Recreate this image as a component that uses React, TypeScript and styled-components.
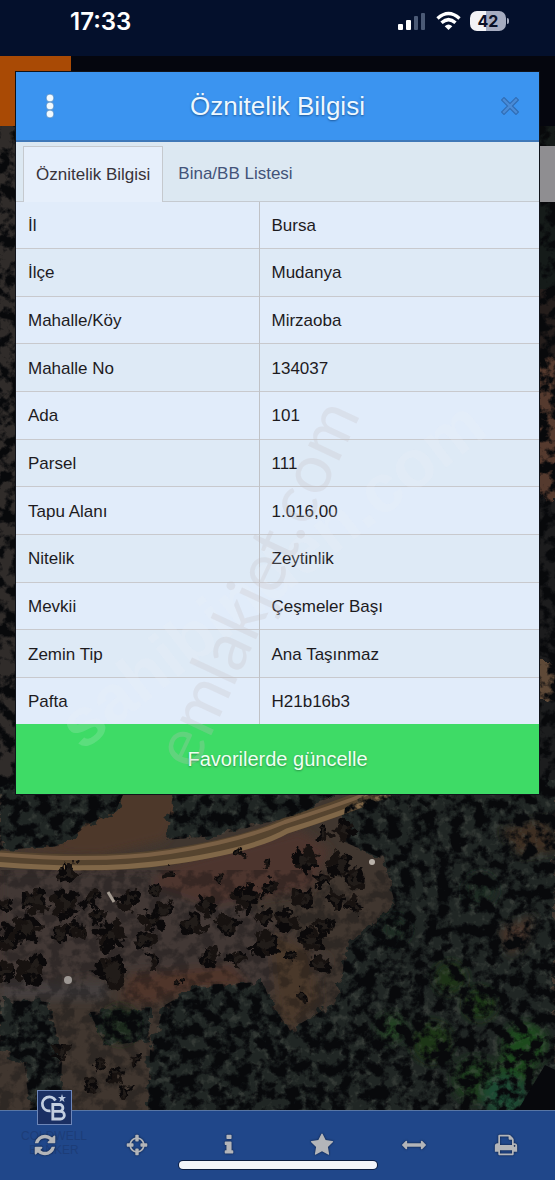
import React from "react";
import styled, { createGlobalStyle } from "styled-components";

const GlobalStyle = createGlobalStyle`
  * { box-sizing: border-box; }
  body {
    margin: 0;
    background: #15191a;
    font-family: "Liberation Sans", Arial, Helvetica, sans-serif;
  }
  button { font: inherit; border: 0; margin: 0; padding: 0; cursor: pointer; }
`;

const Screen = styled.div`
  position: relative;
  display: flex;
  flex-direction: column;
  min-height: 100vh;
  overflow: hidden;
`;

const MapLayer = styled.svg`
  position: absolute;
  inset: 0;
  width: 100%;
  height: 100%;
`;

const StatusBar = styled.header`
  position: relative;
  display: flex;
  justify-content: space-between;
  align-items: flex-start;
  height: 56px;
  padding: 8px 49px 0 70px;
  background: #04102c;
  color: #ffffff;
`;

const Clock = styled.time`
  font-family: Inter, "Liberation Sans", sans-serif;
  font-size: 24px;
  line-height: 28px;
  font-weight: 600;
`;

const StatusIcons = styled.div`
  display: flex;
  align-items: center;
  gap: 9px;
  height: 26px;
`;

const Battery = styled.div`
  position: relative;
  width: 36px;
  height: 20px;
  border-radius: 7px;
  background: linear-gradient(to right, #f2f2f6 45%, #a6acc0 45%);
  color: #0a1026;
  font-family: Inter, "Liberation Sans", sans-serif;
  font-size: 16px;
  line-height: 20px;
  font-weight: 700;
  text-align: center;

  &::after {
    content: "";
    position: absolute;
    right: -3px;
    top: 7px;
    width: 2px;
    height: 6px;
    border-radius: 0 2px 2px 0;
    background: #a6acc0;
  }
`;

const Main = styled.main`
  position: relative;
  flex: 1;
  padding: 16px;
`;

const TopBar = styled.div`
  position: absolute;
  top: 0;
  left: 0;
  right: 0;
  height: 70px;
  background: #05060e;
`;

const MenuTile = styled.div`
  width: 71px;
  height: 70px;
  background: #a94a05;
`;

const MapControl = styled.div`
  position: absolute;
  top: 90px;
  right: 0;
  width: 60px;
  height: 56px;
  background: #8f8e91;
`;

const Dialog = styled.section`
  position: relative;
  background: #e1ecfa;
  box-shadow: 0 0 0 1px #10131a;
`;

const DialogHeader = styled.div`
  display: grid;
  grid-template-columns: 68px 1fr 68px;
  align-items: center;
  height: 70px;
  background: #3b94f0;
  border-bottom: 2px solid #3f78b8;
`;

const DialogTitle = styled.h1`
  margin: 0;
  color: #eef8ff;
  font-size: 26px;
  line-height: 32px;
  font-weight: 400;
  text-align: center;
  text-shadow: 0 1px 2px #1f5a9c;
`;

const HeaderButton = styled.button<{ $end?: boolean }>`
  display: flex;
  justify-content: center;
  align-items: center;
  height: 68px;
  padding-left: ${(p) => (p.$end ? 10 : 0)}px;
  background: transparent;
`;

const TabList = styled.div`
  display: flex;
  height: 60px;
  padding: 4px 7px 0;
  background: #dce8f2;
  border-bottom: 1px solid #c5cad0;
`;

const Tab = styled.button<{ $active?: boolean }>`
  height: 56px;
  padding: 0 ${(p) => (p.$active ? 12 : 15)}px;
  border: ${(p) => (p.$active ? "1px solid #c5c9ce" : "0")};
  border-bottom: 0;
  background: ${(p) => (p.$active ? "#e6effb" : "transparent")};
  color: ${(p) => (p.$active ? "#38333a" : "#435379")};
  font-size: 17px;
  line-height: 20px;
`;

const Table = styled.table`
  width: 100%;
  height: 522px;
  border-collapse: collapse;
  table-layout: fixed;
  color: #1d1b1e;
  font-size: 17px;
  line-height: 20px;
`;

const Row = styled.tr`
  background: #e1ecfa;
  &:nth-child(even) { background: #deeaf6; }
  & + & { border-top: 1px solid #c8c9cd; }
`;

const Name = styled.th`
  width: 243px;
  padding: 2px 12px 0;
  border-right: 1px solid #c0c2c6;
  font-weight: 400;
  text-align: left;
`;

const Value = styled.td`
  padding: 2px 12px 0;
`;

const SaveButton = styled.button`
  display: block;
  width: 100%;
  height: 70px;
  background: #3edb66;
  color: #f0fff2;
  font-size: 20px;
  line-height: 24px;
  text-shadow: 0 1px 2px #2a8f45;
`;

const Watermark = styled.svg`
  position: absolute;
  inset: 0;
  width: 100%;
  height: 100%;
  pointer-events: none;
`;

const Toolbar = styled.nav`
  position: relative;
  display: grid;
  grid-template-columns: repeat(6, 1fr);
  height: 70px;
  padding-right: 2px;
  border-top: 1px solid #5876a5;
  background: #20478a;
`;

const ToolButton = styled.button`
  display: flex;
  justify-content: center;
  align-items: center;
  height: 68px;
  padding-right: 2px;
  background: transparent;
  color: #b3b5b9;

  svg { filter: drop-shadow(0 0 1px #0b1c3c); }
`;

const HomeIndicator = styled.div`
  position: absolute;
  left: 50%;
  bottom: 11px;
  width: 198px;
  height: 8px;
  border-radius: 4px;
  background: #f3f5fa;
  box-shadow: 0 0 0 1px #0d1e42;
  transform: translateX(-50%);
`;

const Agency = styled.div`
  position: absolute;
  left: 22px;
  top: -21px;
  display: flex;
  flex-direction: column;
  align-items: center;
  gap: 4px;
  width: 64px;
  color: #1d3d78;
  font-size: 12px;
  line-height: 14px;
  text-align: center;
`;

const rows: [string, string][] = [
  ["İl", "Bursa"],
  ["İlçe", "Mudanya"],
  ["Mahalle/Köy", "Mirzaoba"],
  ["Mahalle No", "134037"],
  ["Ada", "101"],
  ["Parsel", "111"],
  ["Tapu Alanı", "1.016,00"],
  ["Nitelik", "Zeytinlik"],
  ["Mevkii", "Çeşmeler Başı"],
  ["Zemin Tip", "Ana Taşınmaz"],
  ["Pafta", "H21b16b3"],
];

const tools: { label: string; d: string }[] = [
  {
    label: "Yenile",
    d: "M1639 1056q0 5-1 7-64 268-268 434.5t-478 166.5q-146 0-282.500-55t-243.500-157l-129 129q-19 19-45 19t-45-19-19-45v-448q0-26 19-45t45-19h448q26 0 45 19t19 45-19 45l-137 137q71 66 161 102t187 36q134 0 250-65t186-179q11-17 53-117 8-23 30-23h192q13 0 22.500 9.500t9.500 22.500zm25-800v448q0 26-19 45t-45 19h-448q-26 0-45-19t-19-45 19-45l138-138q-148-137-349-137-134 0-250 65t-186 179q-11 17-53 117-8 23-30 23h-199q-13 0-22.500-9.500t-9.500-22.500v-7q65-268 270-434.500t480-166.500q146 0 284 55.500t245 156.500l130-129q19-19 45-19t45 19 19 45z",
  },
  {
    label: "Konum",
    d: "M1325 1024h-109q-26 0-45-19t-19-45v-128q0-26 19-45t45-19h109q-32-108-112.500-188.500t-188.500-112.500v109q0 26-19 45t-45 19h-128q-26 0-45-19t-19-45v-109q-108 32-188.500 112.500t-112.500 188.500h109q26 0 45 19t19 45v128q0 26-19 45t-45 19h-109q32 108 112.500 188.500t188.500 112.500v-109q0-26 19-45t45-19h128q26 0 45 19t19 45v109q108-32 188.500-112.500t112.500-188.500zm339-192v128q0 26-19 45t-45 19h-143q-37 161-154.500 278.500t-278.500 154.500v143q0 26-19 45t-45 19h-128q-26 0-45-19t-19-45v-143q-161-37-278.500-154.500t-154.500-278.500h-143q-26 0-45-19t-19-45v-128q0-26 19-45t45-19h143q37-161 154.500-278.500t278.500-154.500v-143q0-26 19-45t45-19h128q26 0 45 19t19 45v143q161 37 278.500 154.500t154.500 278.500h143q26 0 45 19t19 45z",
  },
  {
    label: "Bilgi",
    d: "M1216 1344v128q0 26-19 45t-45 19h-512q-26 0-45-19t-19-45v-128q0-26 19-45t45-19h64v-384h-64q-26 0-45-19t-19-45v-128q0-26 19-45t45-19h384q26 0 45 19t19 45v576h64q26 0 45 19t19 45zm-128-1152v192q0 26-19 45t-45 19h-256q-26 0-45-19t-19-45v-192q0-26 19-45t45-19h256q26 0 45 19t19 45z",
  },
  {
    label: "Favoriler",
    d: "M1728 647q0 22-26 48l-363 354 86 500q1 7 1 20 0 21-10.500 35.500t-30.500 14.500q-19 0-40-12l-449-236-449 236q-22 12-40 12-21 0-31.500-14.500t-10.500-35.500q0-6 2-20l86-500-364-354q-25-27-25-48 0-37 56-46l502-73 225-455q19-41 49-41t49 41l225 455 502 73q56 9 56 46z",
  },
  {
    label: "Ölçüm",
    d: "M1792 896q0 26-19 45l-256 256q-19 19-45 19t-45-19-19-45v-128h-1024v128q0 26-19 45t-45 19-45-19l-256-256q-19-19-19-45t19-45l256-256q19-19 45-19t45 19 19 45v128h1024v-128q0-26 19-45t45-19 45 19l256 256q19 19 19 45z",
  },
  {
    label: "Yazdır",
    d: "M448 1536h896v-256h-896v256zm0-640h896v-384h-160q-40 0-68-28t-28-68v-160h-640v640zm1152 64q0-26-19-45t-45-19-45 19-19 45 19 45 45 19 45-19 19-45zm128 0v416q0 13-9.500 22.500t-22.500 9.500h-224v160q0 40-28 68t-68 28h-960q-40 0-68-28t-28-68v-160h-224q-13 0-22.500-9.500t-9.500-22.500v-416q0-79 56.500-135.500t135.500-56.500h64v-544q0-40 28-68t68-28h672q40 0 88 20t76 48l152 152q28 28 48 76t20 88v256h64q79 0 135.500 56.500t56.500 135.500z",
  },
];

/* Olive trees in the grove: x, y, crown radius. */
const trees: [number, number, number][] = [
  [67, 873, 10], [35, 902, 12], [65, 905, 14], [90, 900, 9], [98, 915, 8],
  [128, 900, 11], [27, 927, 14], [60, 933, 8], [75, 930, 9], [8, 940, 14],
  [5, 905, 9], [110, 935, 15], [112, 972, 17], [152, 920, 12], [165, 910, 8],
  [145, 940, 10], [153, 961, 8], [32, 970, 15], [5, 972, 10], [192, 925, 12],
  [207, 905, 10], [230, 925, 12], [210, 958, 9], [238, 958, 9], [247, 898, 14],
  [265, 945, 14], [268, 888, 9], [240, 852, 6], [170, 875, 5], [220, 878, 5],
  [156, 890, 6], [268, 862, 5], [180, 982, 4], [305, 860, 14], [325, 833, 7],
  [345, 830, 11], [340, 865, 14], [322, 880, 9], [355, 880, 10], [305, 898, 11],
  [335, 900, 10], [287, 920, 12], [312, 940, 13], [325, 925, 9], [320, 965, 10],
  [290, 957, 6], [303, 995, 6], [355, 905, 8], [100, 1065, 5], [115, 1075, 8],
  [135, 1062, 6], [90, 1085, 8], [60, 1050, 8], [125, 1092, 8], [265, 918, 8],
];

const grassPatches: [number, number, number, string][] = [
  [450, 978, 16, "#1a3319"], [480, 1004, 16, "#1b3819"], [392, 1028, 14, "#234024"],
  [432, 1042, 20, "#1b3519"], [525, 1045, 22, "#1f4a1c"], [515, 1068, 18, "#1e461f"],
  [475, 1080, 22, "#1c3a1c"], [505, 1096, 22, "#1f4a30"], [120, 1025, 18, "#1c2c1b"],
  [395, 930, 14, "#1b2b22"], [480, 890, 16, "#1d2a22"],
];

function Satellite() {
  return (
    <MapLayer viewBox="0 0 555 1180" preserveAspectRatio="xMidYMid slice" aria-hidden="true">
      <defs>
        <filter id="ragged" x="0" y="0" width="100%" height="100%" colorInterpolationFilters="sRGB">
          <feTurbulence type="fractalNoise" baseFrequency="0.09" numOctaves={3} seed={4} result="n" />
          <feDisplacementMap in="SourceGraphic" in2="n" scale={18} xChannelSelector="R" yChannelSelector="G" />
        </filter>
        <filter id="shade" x="0" y="0" width="100%" height="100%" colorInterpolationFilters="sRGB">
          <feTurbulence type="fractalNoise" baseFrequency="0.08" numOctaves={4} seed={11} />
          <feColorMatrix values="0 0 0 0 0.03  0 0 0 0 0.035  0 0 0 0 0.045  5 0 0 0 -2.1" />
          <feComposite in2="SourceGraphic" operator="in" />
        </filter>
        <filter id="glint" x="0" y="0" width="100%" height="100%" colorInterpolationFilters="sRGB">
          <feTurbulence type="fractalNoise" baseFrequency="0.13" numOctaves={3} seed={27} />
          <feColorMatrix values="0 0 0 0 0.32  0 0 0 0 0.34  0 0 0 0 0.31  0 4 0 0 -2.1" />
          <feComposite in2="SourceGraphic" operator="in" />
        </filter>
        <filter id="soft" x="-20%" y="-20%" width="140%" height="140%">
          <feGaussianBlur stdDeviation="5" />
        </filter>
        <g id="forest">
          <path d="M0 780H130L115 812 92 822 60 846 0 850Z" />
          <path d="M176 780H360L300 814 215 836 165 840Z" />
          <path d="M385 780H555V1180H145L150 1050 165 1005 200 985 262 982 275 1010 290 1030 340 1000 345 950 395 905 385 860 340 840 345 808Z" />
          <path d="M0 1000 50 1002 62 1060 60 1110H30L24 1062 0 1050Z" />
          <path d="M90 1012 150 1008 150 1040 105 1046Z" />
        </g>
      </defs>
      <rect width="555" height="1180" fill="#40362f" />
      <g filter="url(#soft)">
        <path d="M0 870H170L240 900 330 960 300 1000 150 970 0 990Z" fill="#423936" />
        <path d="M80 790H190L165 840 100 856 0 852 60 842Z" fill="#4e392b" />
        <path d="M170 865 300 830 330 850 310 890 210 905 150 885Z" fill="#4e352d" />
        <path d="M130 975 230 965 250 985 190 990 150 1005 120 1000Z" fill="#50342c" />
        <path d="M270 930 310 950 320 1000 290 1030 276 1010Z" fill="#4a382c" />
        <path d="M0 985 110 982 105 1000 0 1000Z" fill="#45403f" />
      </g>
      <g filter="url(#ragged)">
        <rect x="-20" y="120" width="50" height="670" fill="#302c2a" />
        <rect x="530" y="110" width="40" height="250" fill="#151b19" />
        <rect x="530" y="290" width="40" height="70" fill="#241d1b" />
        <rect x="530" y="360" width="40" height="138" fill="#553a2e" />
        <rect x="530" y="498" width="40" height="165" fill="#1c1c1d" />
        <rect x="530" y="663" width="40" height="36" fill="#5e4937" />
        <rect x="530" y="700" width="40" height="90" fill="#1c1d1e" />
        <use href="#forest" fill="#202624" />
      </g>
      <g filter="url(#soft)">
        <path d="M500 830 545 818 560 850 520 856Z" fill="#3c2f24" />
        <path d="M498 930 535 915 525 945 510 955Z" fill="#4a342b" />
        {grassPatches.map(([x, y, r, fill]) => (
          <circle key={`${x}-${y}`} cx={x} cy={y} r={r} fill={fill} />
        ))}
      </g>
      <g fill="none">
        <path d="M-5 858Q100 868 175 856T285 826Q330 812 380 792" stroke="#56442f" strokeWidth="16" />
        <path d="M-5 854Q100 863 170 852T285 822Q330 808 372 792" stroke="#7a6045" strokeWidth="4" />
        <path d="M-5 864Q100 873 178 861T287 831Q335 816 390 794" stroke="#806748" strokeWidth="5" />
      </g>
      <use href="#forest" fill="#fff" filter="url(#glint)" opacity="0.4" />
      <use href="#forest" fill="#fff" filter="url(#shade)" />
      <path d="M0 126H20V790H0ZM538 126H555V790H538Z" fill="#fff" filter="url(#shade)" />
      <rect x="0" y="870" width="400" height="240" fill="#fff" filter="url(#shade)" opacity="0.3" />
      <path d="M518 1110 545 1065 560 1072V1115Z" fill="#07080c" />
      <g filter="url(#ragged)">
        {trees.map(([x, y, r], i) => (
          <g key={i}>
            <circle cx={x} cy={y} r={r * 0.7} fill="#211c19" />
            {[0, 1, 2, 3, 4, 5, 6].map((k) => {
              const angle = k * 0.9 + i * 1.7;
              return (
                <circle
                  key={k}
                  cx={x + Math.cos(angle) * r * 0.7}
                  cy={y + Math.sin(angle) * r * 0.7}
                  r={r * (k % 2 ? 0.26 : 0.36)}
                  fill={k % 3 ? "#0b090a" : "#171210"}
                />
              );
            })}
          </g>
        ))}
      </g>
      <path d="M108 892 114 902" stroke="#a59c92" strokeWidth="3" />
      <circle cx="68" cy="980" r="4" fill="#9d9894" />
      <circle cx="372" cy="862" r="3" fill="#b9b2aa" />
    </MapLayer>
  );
}

function Signal() {
  return (
    <svg width="29" height="20" viewBox="0 0 29 20" aria-hidden="true">
      <rect x="0" y="13" width="5" height="6" rx="1" fill="#fff" />
      <rect x="8" y="9" width="5" height="10" rx="1" fill="#fff" />
      <rect x="16" y="5" width="4" height="14" rx="1" fill="#4b5a76" />
      <rect x="23" y="2" width="4" height="17" rx="1" fill="#4b5a76" />
    </svg>
  );
}

function Wifi() {
  return (
    <svg width="25" height="20" viewBox="0 0 25 20" fill="none" stroke="#fff" strokeWidth="3.4" aria-hidden="true">
      <path d="M1.500 7.500Q12.500-2.500 23.500 7.500" />
      <path d="M5.500 11.800Q12.500 5.500 19.500 11.800" />
      <path d="M12.500 19 8.700 15.200Q12.500 11.700 16.300 15.200Z" fill="#fff" stroke="none" />
    </svg>
  );
}

function AgencyLogo() {
  return (
    <svg width="35" height="35" viewBox="0 0 35 35" role="img" aria-label="CB">
      <rect x="0.500" y="0.500" width="34" height="34" fill="#1a2f63" stroke="#6d86b8" />
      <g fill="none" stroke="#c3cee0" strokeWidth="2.800">
        <path d="M18.500 10.500A7 7 0 1 0 13.500 20.800" />
        <path d="M15.800 14.500H22.500a3.300 3.300 0 0 1 0 6.800H15.800ZM15.800 21.300H23.500a3.800 3.800 0 0 1 0 7.700H15.800Z" />
      </g>
      <path d="M25 4l1 3h3l-2.400 1.900.9 3.100L25 10.200 22.500 12l.9-3.100L21 7h3z" fill="#b9c6dd" />
    </svg>
  );
}

export default function App() {
  return (
    <Screen>
      <GlobalStyle />
      <Satellite />
      <StatusBar>
        <Clock>17:33</Clock>
        <StatusIcons>
          <Signal />
          <Wifi />
          <Battery>42</Battery>
        </StatusIcons>
      </StatusBar>
      <Main>
        <TopBar>
          <MenuTile />
        </TopBar>
        <MapControl />
        <Dialog role="dialog" aria-labelledby="dialog-title">
          <DialogHeader>
            <HeaderButton type="button" aria-label="Menü">
              <svg width="10" height="26" viewBox="0 0 10 26" fill="#f2faff" stroke="#2d6eb4" strokeWidth="0.600">
                <circle cx="5" cy="5" r="3.900" />
                <circle cx="5" cy="13" r="3.900" />
                <circle cx="5" cy="21" r="3.900" />
              </svg>
            </HeaderButton>
            <DialogTitle id="dialog-title">Öznitelik Bilgisi</DialogTitle>
            <HeaderButton type="button" aria-label="Kapat" $end>
              <svg width="18" height="18" viewBox="0 0 18 18" fill="none" strokeLinecap="square">
                <path d="M3 3 15 15M15 3 3 15" stroke="#2f6cb4" strokeWidth="4.600" />
                <path d="M3 3 15 15M15 3 3 15" stroke="#4a8bd6" strokeWidth="2.400" />
              </svg>
            </HeaderButton>
          </DialogHeader>
          <TabList role="tablist">
            <Tab type="button" role="tab" aria-selected="true" $active>
              Öznitelik Bilgisi
            </Tab>
            <Tab type="button" role="tab" aria-selected="false">
              Bina/BB Listesi
            </Tab>
          </TabList>
          <Table>
            <tbody>
              {rows.map(([name, value]) => (
                <Row key={name}>
                  <Name scope="row">{name}</Name>
                  <Value>{value}</Value>
                </Row>
              ))}
            </tbody>
          </Table>
          <SaveButton type="button">Favorilerde güncelle</SaveButton>
          <Watermark viewBox="0 0 523 722" aria-hidden="true">
            <text
              transform="translate(66 680) rotate(-38)"
              fontFamily="Liberation Sans, sans-serif"
              fontWeight="700"
              fontSize="68"
              fill="#f4f4f8"
              fillOpacity="0.16"
            >
              sahibinden.com
            </text>
            <text
              transform="translate(178 700) rotate(-65)"
              fontFamily="Lato, sans-serif"
              fontSize="68"
              fill="#c4bfc0"
              fillOpacity="0.26"
            >
              emlakjet.com
            </text>
          </Watermark>
        </Dialog>
      </Main>
      <Toolbar aria-label="Harita araçları">
        <Agency>
          <AgencyLogo />
          <div>
            COLDWELL
            <br />
            BANKER
          </div>
        </Agency>
        {tools.map((tool) => (
          <ToolButton key={tool.label} type="button" aria-label={tool.label}>
            <svg width="24" height="24" viewBox="0 0 1792 1792" fill="currentColor">
              <path d={tool.d} />
            </svg>
          </ToolButton>
        ))}
        <HomeIndicator />
      </Toolbar>
    </Screen>
  );
}
